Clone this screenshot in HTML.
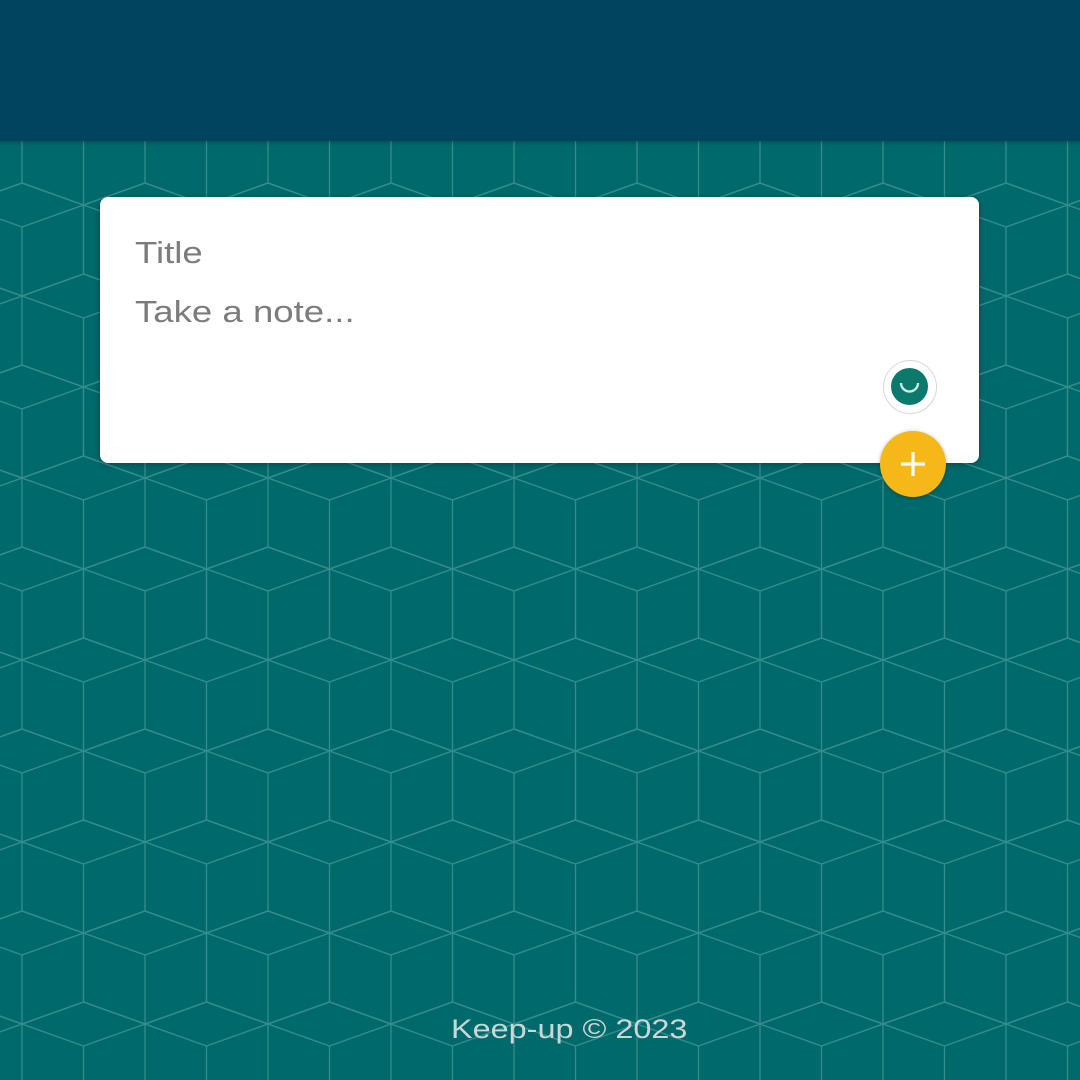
<!DOCTYPE html>
<html><head><style>
html,body{margin:0;padding:0;width:1080px;height:1080px;overflow:hidden;background:#00696b;font-family:"Liberation Sans",sans-serif}
#bg{position:absolute;left:0;top:0}
header{position:absolute;left:0;top:0;width:1080px;height:141px;background:#00445f;box-shadow:0 1px 4px rgba(0,0,0,.3)}
.card{position:absolute;left:100px;top:197px;width:879px;height:266px;background:#fff;border-radius:8px;box-shadow:0 1px 6px rgba(0,0,0,.35)}
.t{position:absolute;left:35px;font-size:31px;color:#7c7c7c;transform-origin:0 0;transform:scaleX(1.18);white-space:nowrap}
.smile{position:absolute;left:783px;top:163px;width:54px;height:54px;border-radius:50%;border:1.5px solid #d8d8e0;background:#fff;box-sizing:border-box}
.smile div{position:absolute;left:7px;top:7px;width:37px;height:37px;border-radius:50%;background:#0b7a6c}
.plus{position:absolute;left:880px;top:431px;width:66px;height:66px;border-radius:50%;background:#f5b818;box-shadow:0 1px 4px rgba(0,0,0,.3)}
footer{position:absolute;left:451px;top:1014px;color:#c9d8d6;font-size:27px;transform-origin:0 0;transform:scaleX(1.2);white-space:nowrap}
</style></head><body>
<svg id="bg" width="1080" height="1080">
<defs>
<g id="cube" stroke="#bfe6e4" stroke-width="1.3" fill="none">
<path d="M0 0L-61.5 -22M0 0L61.5 -22M0 0L0 69M0 -44L61.5 -22L61.5 47L0 69L-61.5 47L-61.5 -22Z"/>
</g>
<pattern id="p" patternUnits="userSpaceOnUse" x="22" y="45" width="123" height="182">
<g opacity="0.28">
<use href="#cube" x="0" y="0"/><use href="#cube" x="123" y="0"/>
<use href="#cube" x="0" y="182"/><use href="#cube" x="123" y="182"/>
<use href="#cube" x="61.5" y="91"/><use href="#cube" x="61.5" y="-91"/><use href="#cube" x="61.5" y="273"/>
</g>
</pattern>
</defs>
<rect width="1080" height="1080" fill="url(#p)"/>
</svg>
<header></header>
<div class="card">
<div class="t" style="top:38px">Title</div>
<div class="t" style="top:97px">Take a note...</div>
<div class="smile"><div><svg width="37" height="37"><path d="M10 15 A8.5 8.5 0 0 0 27 15" stroke="#cde8e2" stroke-width="2.4" fill="none"/></svg></div></div>
</div>
<div class="plus"><svg width="66" height="66"><path d="M33 21V45M21 33H45" stroke="#fff" stroke-width="3.2"/></svg></div>
<footer>Keep-up © 2023</footer>
</body></html>
